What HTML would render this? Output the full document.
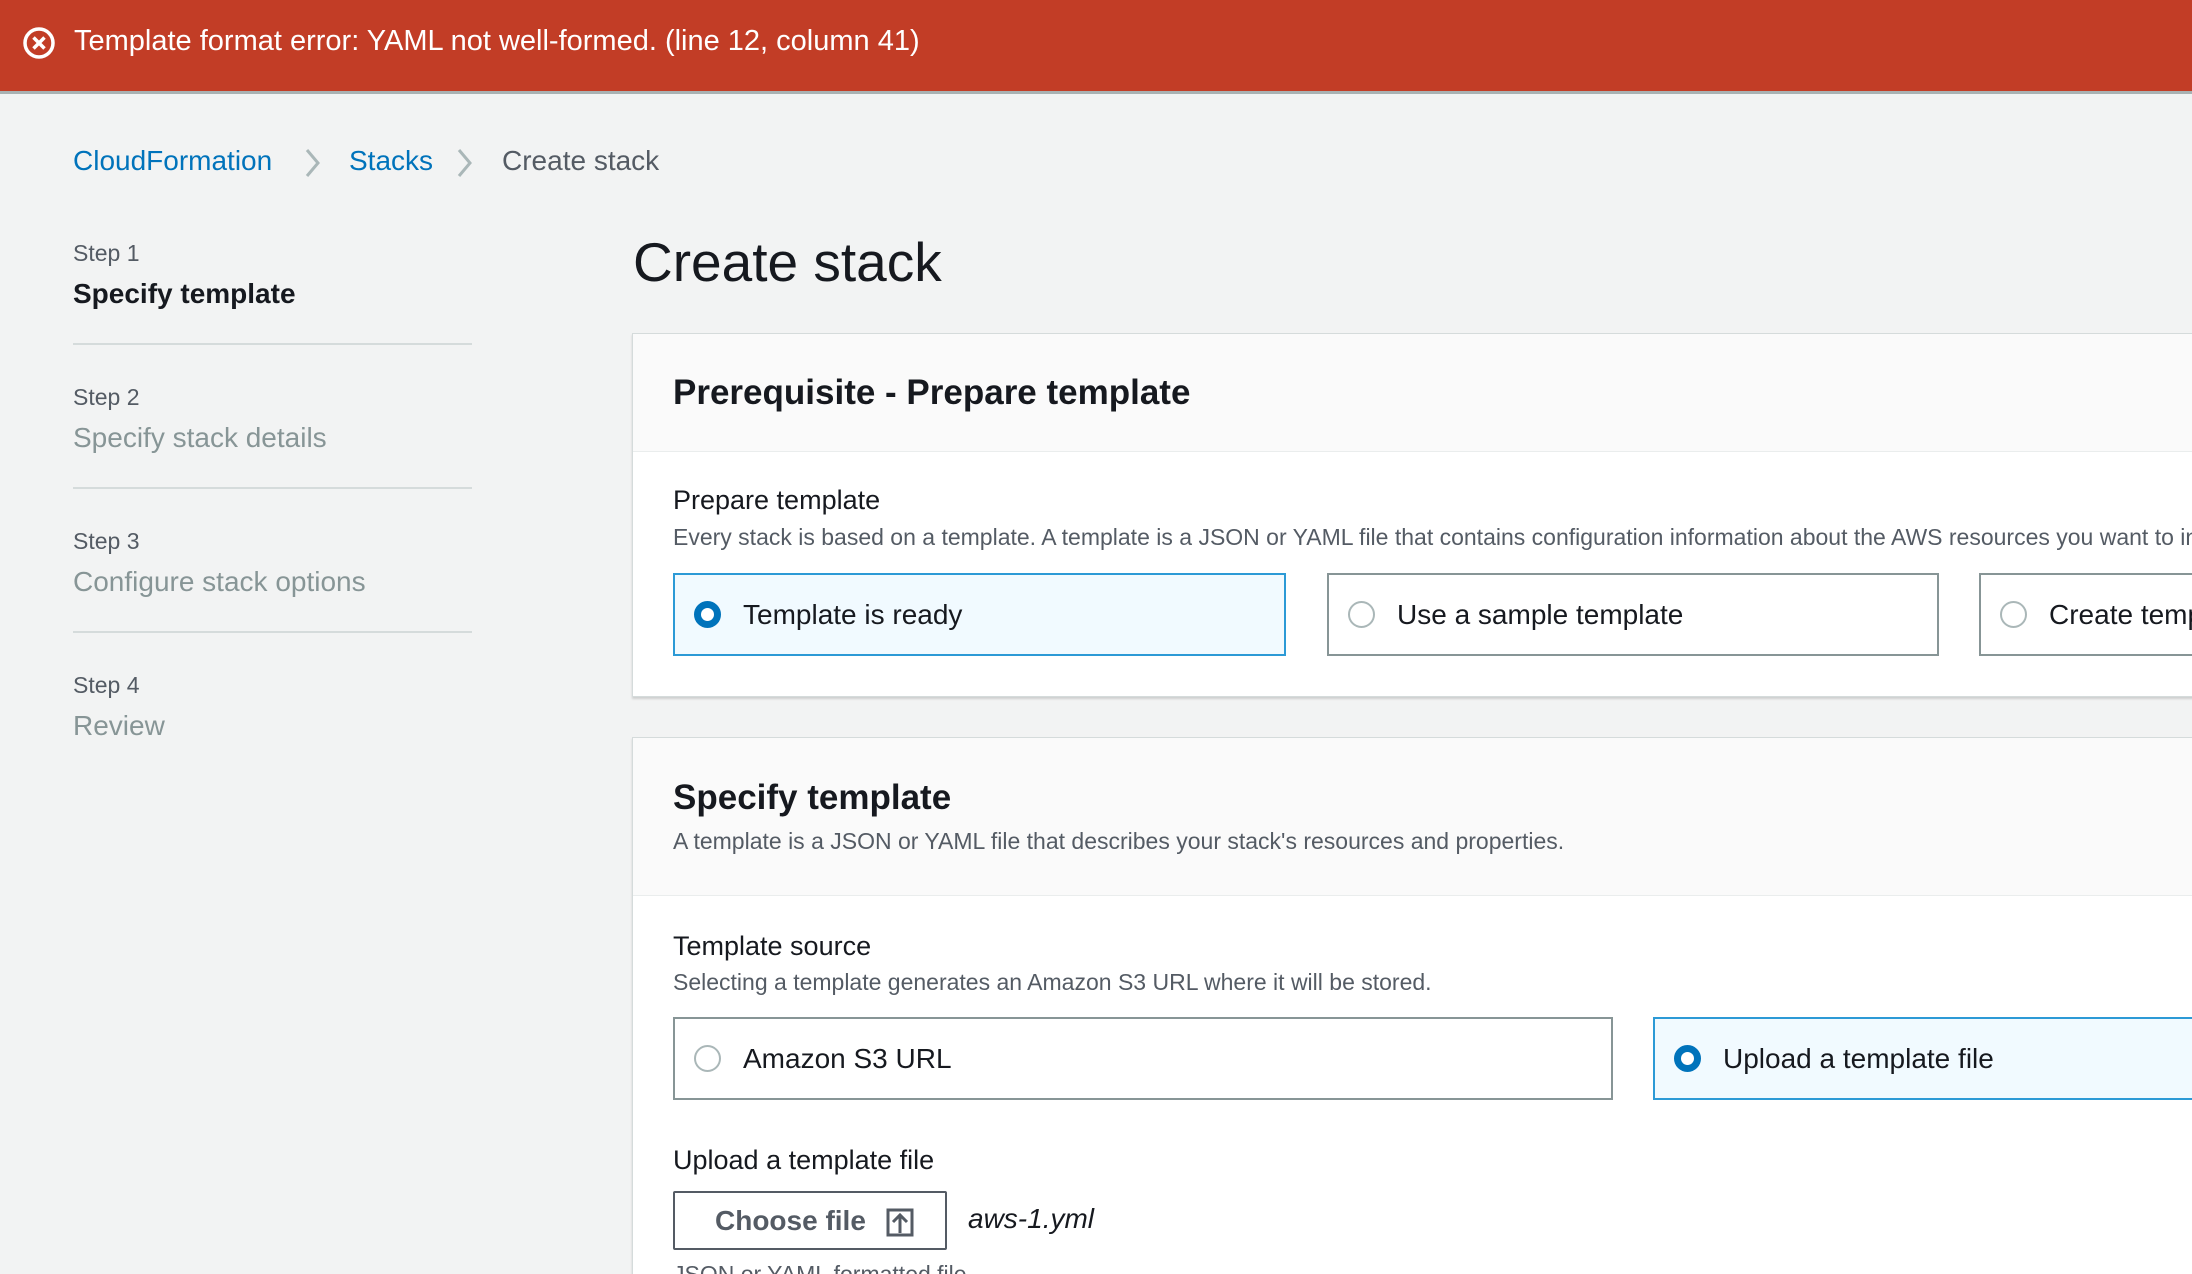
<!DOCTYPE html>
<html><head><meta charset="utf-8"><style>
*{box-sizing:border-box;margin:0;padding:0}
html,body{width:2192px;height:1274px;overflow:hidden}
body{background:#f2f3f3;font-family:"Liberation Sans",sans-serif;color:#16191f}
#w{position:relative;width:2192px;height:1274px;overflow:hidden}
.a{position:absolute;white-space:nowrap}
.banner{left:0;top:0;width:2192px;height:94px;background:#c23d26;border-bottom:3px solid #a9b2b3}
.panel{position:absolute;left:632px;width:1600px;background:#fff;border:1px solid #d5dbdb;box-shadow:0 2px 2px rgba(0,0,0,.15);overflow:hidden}
.ph{position:absolute;left:0;top:0;width:100%;background:#fafafa;border-bottom:1px solid #eaeded}
.opt{position:absolute;height:83px;border:2px solid #879596;background:#fff;font-size:28px;line-height:79px;padding-left:68px;overflow:hidden}
.opt.sel{background:#f1faff;border-color:#2c9ad6}
.r{position:absolute;left:19px;top:26px;width:27px;height:27px;border-radius:50%;border:2px solid #aab7b8;background:#fff}
.sel .r{border:7px solid #0073bb}
.step{font-size:23px;color:#545b64}
.sn{font-size:28px;color:#879596}
.div{position:absolute;left:73px;width:399px;height:2px;background:#d5dbdb}
</style></head><body><div id="w">
<div class="a banner"></div>
<svg class="a" style="left:22px;top:26px" width="34" height="34" viewBox="0 0 34 34"><circle cx="17" cy="17" r="14" fill="none" stroke="#fff" stroke-width="3.5"/><path d="M11.5 11.5L22.5 22.5M22.5 11.5L11.5 22.5" stroke="#fff" stroke-width="3.5"/></svg>
<div class="a" style="left:74px;top:25px;font-size:29px;color:#fff">Template format error: YAML not well-formed. (line 12, column 41)</div>

<div class="a" style="left:73px;top:145px;font-size:28px;color:#0073bb">CloudFormation</div>
<svg class="a" style="left:303px;top:148px" width="20" height="30"><path d="M4 2L15 15L4 28" fill="none" stroke="#aab7b8" stroke-width="3"/></svg>
<div class="a" style="left:349px;top:145px;font-size:28px;color:#0073bb">Stacks</div>
<svg class="a" style="left:455px;top:148px" width="20" height="30"><path d="M4 2L15 15L4 28" fill="none" stroke="#aab7b8" stroke-width="3"/></svg>
<div class="a" style="left:502px;top:145px;font-size:28px;color:#545b64">Create stack</div>

<div class="a step" style="left:73px;top:240px">Step 1</div>
<div class="a" style="left:73px;top:278px;font-size:28px;font-weight:bold">Specify template</div>
<div class="div" style="top:343px"></div>
<div class="a step" style="left:73px;top:384px">Step 2</div>
<div class="a sn" style="left:73px;top:422px">Specify stack details</div>
<div class="div" style="top:487px"></div>
<div class="a step" style="left:73px;top:528px">Step 3</div>
<div class="a sn" style="left:73px;top:566px">Configure stack options</div>
<div class="div" style="top:631px"></div>
<div class="a step" style="left:73px;top:672px">Step 4</div>
<div class="a sn" style="left:73px;top:710px">Review</div>

<div class="a" style="left:633px;top:230px;font-size:55px">Create stack</div>

<div class="panel" style="top:333px;height:364px">
 <div class="ph" style="height:118px"></div>
 <div class="a" style="left:40px;top:39px;font-size:35px;font-weight:bold">Prerequisite - Prepare template</div>
 <div class="a" style="left:40px;top:151px;font-size:27px">Prepare template</div>
 <div class="a" style="left:40px;top:190px;font-size:23px;color:#545b64">Every stack is based on a template. A template is a JSON or YAML file that contains configuration information about the AWS resources you want to include</div>
 <div class="opt sel" style="left:40px;top:239px;width:613px"><div class="r"></div>Template is ready</div>
 <div class="opt" style="left:694px;top:239px;width:612px"><div class="r"></div>Use a sample template</div>
 <div class="opt" style="left:1346px;top:239px;width:612px"><div class="r"></div>Create template in Designer</div>
</div>

<div class="panel" style="top:737px;height:600px">
 <div class="ph" style="height:158px"></div>
 <div class="a" style="left:40px;top:40px;font-size:35px;font-weight:bold">Specify template</div>
 <div class="a" style="left:40px;top:90px;font-size:23px;color:#545b64">A template is a JSON or YAML file that describes your stack's resources and properties.</div>
 <div class="a" style="left:40px;top:193px;font-size:27px">Template source</div>
 <div class="a" style="left:40px;top:231px;font-size:23px;color:#545b64">Selecting a template generates an Amazon S3 URL where it will be stored.</div>
 <div class="opt" style="left:40px;top:279px;width:940px"><div class="r"></div>Amazon S3 URL</div>
 <div class="opt sel" style="left:1020px;top:279px;width:600px"><div class="r"></div>Upload a template file</div>
 <div class="a" style="left:40px;top:407px;font-size:27px">Upload a template file</div>
 <div class="a" style="left:40px;top:453px;width:274px;height:59px;border:2px solid #545b64;border-radius:2px;background:#fff;font-size:28px;font-weight:bold;color:#545b64;line-height:55px;padding-left:40px">Choose file
  <svg style="position:absolute;left:210px;top:14px" width="30" height="30" viewBox="0 0 30 30"><rect x="3" y="3" width="24" height="25" fill="none" stroke="#545b64" stroke-width="3"/><path d="M15 26V9M8 15L15 8L22 15" fill="none" stroke="#545b64" stroke-width="3"/></svg></div>
 <div class="a" style="left:335px;top:465px;font-size:28px;font-style:italic">aws-1.yml</div>
 <div class="a" style="left:40px;top:523px;font-size:23px;color:#545b64">JSON or YAML formatted file</div>
</div>
</div></body></html>
